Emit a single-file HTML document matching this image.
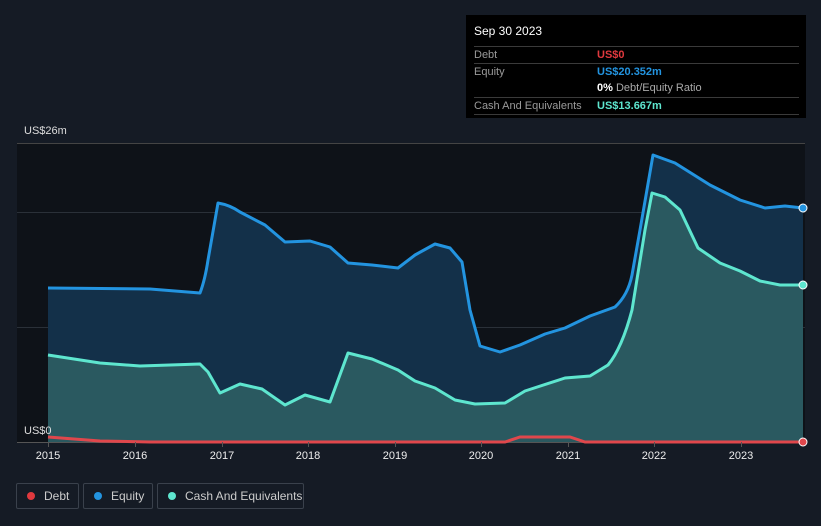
<!DOCTYPE html>
<html><head><style>
html,body{margin:0;width:821px;height:526px;overflow:hidden}
body{background:#151b25;font-family:"Liberation Sans",sans-serif;position:relative}
.tt{position:absolute;left:466px;top:15px;width:340px;height:103px;background:#000;color:#ccc;font-size:11px}
.row{position:absolute;left:8px;width:325px;border-top:1px solid #3a3a3a;height:17px;line-height:17px}
.lab{color:#9a9a9a}
.v{position:absolute;left:123px;top:0;font-weight:bold}
.leg{position:absolute;top:483px;height:26px;border:1px solid #3a414c;border-radius:2px;color:#ccc;font-size:12px;line-height:24px;box-sizing:border-box;white-space:nowrap}
.dot{display:inline-block;width:8px;height:8px;border-radius:50%;margin:0 9px 0 10px;vertical-align:0}
.yr{position:absolute;top:450px;color:#eee;font-size:11px;width:40px;text-align:center}
</style></head><body>
<svg width="821" height="526" style="position:absolute;left:0;top:0">
<rect x="17" y="143" width="788" height="299" fill="#0e1218"/>
<line x1="17" y1="143.5" x2="805" y2="143.5" stroke="#444" />
<line x1="17" y1="212.5" x2="805" y2="212.5" stroke="#2a3038" />
<line x1="17" y1="327.5" x2="805" y2="327.5" stroke="#2a3038" />
<path d="M48,288 L150,289 L200,293 Q205,280 208,260 L218,203 Q230,205 240,212 L265,225 L285,242 L310,241 L330,247 L348,263 L372,265 L398,268 L415,255 L435,244 L450,248 L462,262 L470,310 L480,346 L500,352 L520,345 L545,334 L565,328 L590,316 L615,307 Q628,295 632,275 L640,230 L653,155 L675,163 L710,185 L740,200 L765,208 L785,206 L803,208 L803,442 L48,442Z" fill="#133049"/>
<path d="M48,355 L100,363 L140,366 L200,364 L208,372 L220,393 L240,384 L262,389 L285,405 L305,395 L330,402 L348,353 L372,359 L398,370 L415,381 L435,388 L455,400 L475,404 L505,403 L525,391 L565,378 L590,376 L608,365 Q622,348 632,310 L645,230 L652,193 L665,197 L680,210 L698,248 L720,263 L740,271 L760,281 L780,285 L803,285 L803,442 L48,442Z" fill="#2a5960"/>
<path d="M48,288 L150,289 L200,293 Q205,280 208,260 L218,203 Q230,205 240,212 L265,225 L285,242 L310,241 L330,247 L348,263 L372,265 L398,268 L415,255 L435,244 L450,248 L462,262 L470,310 L480,346 L500,352 L520,345 L545,334 L565,328 L590,316 L615,307 Q628,295 632,275 L640,230 L653,155 L675,163 L710,185 L740,200 L765,208 L785,206 L803,208" fill="none" stroke="#2394e0" stroke-width="3" stroke-linejoin="round"/>
<path d="M48,355 L100,363 L140,366 L200,364 L208,372 L220,393 L240,384 L262,389 L285,405 L305,395 L330,402 L348,353 L372,359 L398,370 L415,381 L435,388 L455,400 L475,404 L505,403 L525,391 L565,378 L590,376 L608,365 Q622,348 632,310 L645,230 L652,193 L665,197 L680,210 L698,248 L720,263 L740,271 L760,281 L780,285 L803,285" fill="none" stroke="#5ee6cf" stroke-width="3" stroke-linejoin="round"/>
<line x1="17" y1="442.5" x2="805" y2="442.5" stroke="#555"/>
<path d="M48,437 L100,441 L150,442 L505,442 L520,437 L570,437 L585,442 L803,442" fill="none" stroke="#e0474c" stroke-width="3"/>
<g stroke="#555"><line x1="48.5" y1="442" x2="48.5" y2="447"/><line x1="135.5" y1="442" x2="135.5" y2="447"/><line x1="222.5" y1="442" x2="222.5" y2="447"/><line x1="308.5" y1="442" x2="308.5" y2="447"/><line x1="395.5" y1="442" x2="395.5" y2="447"/><line x1="481.5" y1="442" x2="481.5" y2="447"/><line x1="568.5" y1="442" x2="568.5" y2="447"/><line x1="654.5" y1="442" x2="654.5" y2="447"/><line x1="741.5" y1="442" x2="741.5" y2="447"/></g>
<circle cx="803" cy="208" r="4" fill="#2394e0" stroke="#fff" stroke-width="1"/>
<circle cx="803" cy="285" r="4" fill="#5ee6cf" stroke="#fff" stroke-width="1"/>
<circle cx="803" cy="442" r="4" fill="#e0474c" stroke="#fff" stroke-width="1"/>
</svg>
<div style="position:absolute;left:24px;top:125px;color:#ddd;font-size:11px">US$26m</div>
<div style="position:absolute;left:24px;top:425px;color:#ddd;font-size:11px">US$0</div>
<div class="yr" style="left:28px">2015</div><div class="yr" style="left:115px">2016</div><div class="yr" style="left:202px">2017</div><div class="yr" style="left:288px">2018</div><div class="yr" style="left:375px">2019</div><div class="yr" style="left:461px">2020</div><div class="yr" style="left:548px">2021</div><div class="yr" style="left:634px">2022</div><div class="yr" style="left:721px">2023</div>
<div class="tt">
<div style="position:absolute;left:8px;top:9px;color:#fff;font-size:12px">Sep 30 2023</div>
<div class="row" style="top:31px"><span class="lab">Debt</span><span class="v" style="color:#e0393e">US$0</span></div>
<div class="row" style="top:48px"><span class="lab">Equity</span><span class="v" style="color:#2394e0">US$20.352m</span></div>
<div class="row" style="top:65px;border-top:none"><span class="v" style="color:#fff">0% <span style="color:#aaa;font-weight:normal">Debt/Equity Ratio</span></span></div>
<div class="row" style="top:82px"><span class="lab">Cash And Equivalents</span><span class="v" style="color:#5ee6cf">US$13.667m</span></div>
<div class="row" style="top:99px;height:0"></div>
</div>
<div class="leg" style="left:16px;width:63px"><span class="dot" style="background:#e0393e"></span>Debt</div>
<div class="leg" style="left:83px;width:70px"><span class="dot" style="background:#2394e0"></span>Equity</div>
<div class="leg" style="left:157px;width:147px"><span class="dot" style="background:#5ee6cf"></span>Cash And Equivalents</div>
</body></html>
